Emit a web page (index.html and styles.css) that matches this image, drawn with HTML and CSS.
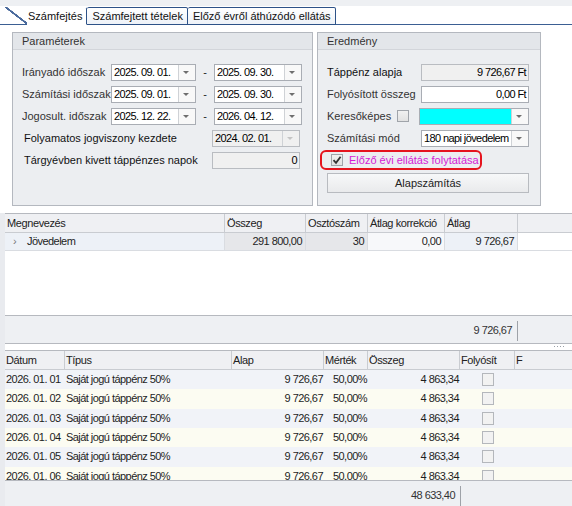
FILE: index.html
```html
<!DOCTYPE html>
<html lang="hu">
<head>
    <meta charset="UTF-8">
    <title>Számfejtés</title>
    <link rel="stylesheet" href="styles.css">
</head>
<body>
    <div class="tabbar">
        <div class="tab-lead"></div>
        <div class="tab active">Számfejtés</div>
        <div class="tab">Számfejtett tételek</div>
        <div class="tab">Előző évről áthúzódó ellátás</div>
        <div class="tab-rest"></div>
    </div>

    <div class="page">
        <div class="groups">
            <div class="group params">
                <div class="group-head">Paraméterek</div>
                <div class="group-body">
                    <div class="row">
                        <span class="lbl">Irányadó időszak</span>
                        <div class="edit date1"><span class="val">2025. 09. 01.</span><span class="drop"></span></div>
                        <span class="dash">-</span>
                        <div class="edit date2"><span class="val">2025. 09. 30.</span><span class="drop"></span></div>
                    </div>
                    <div class="row">
                        <span class="lbl">Számítási időszak</span>
                        <div class="edit date1"><span class="val">2025. 09. 01.</span><span class="drop"></span></div>
                        <span class="dash">-</span>
                        <div class="edit date2"><span class="val">2025. 09. 30.</span><span class="drop"></span></div>
                    </div>
                    <div class="row">
                        <span class="lbl">Jogosult. időszak</span>
                        <div class="edit date1"><span class="val">2025. 12. 22.</span><span class="drop"></span></div>
                        <span class="dash">-</span>
                        <div class="edit date2"><span class="val">2026. 04. 12.</span><span class="drop"></span></div>
                    </div>
                    <div class="row wide">
                        <span class="lbl long">Folyamatos jogviszony kezdete</span>
                        <div class="edit date2 disabled"><span class="val">2024. 02. 01.</span><span class="drop"></span></div>
                    </div>
                    <div class="row wide">
                        <span class="lbl long">Tárgyévben kivett táppénzes napok</span>
                        <div class="edit date2 disabled num"><span class="val">0</span></div>
                    </div>
                </div>
            </div>

            <div class="group result">
                <div class="group-head">Eredmény</div>
                <div class="group-body">
                    <div class="row">
                        <span class="lbl r-lbl dark">Táppénz alapja</span>
                        <div class="edit r-edit disabled num"><span class="val">9 726,67 Ft</span></div>
                    </div>
                    <div class="row">
                        <span class="lbl r-lbl">Folyósított összeg</span>
                        <div class="edit r-edit num"><span class="val">0,00 Ft</span></div>
                    </div>
                    <div class="row">
                        <span class="lbl kereso">Keresőképes</span>
                        <span class="check"></span>
                        <div class="edit color-edit"><span class="swatch"></span><span class="drop"></span></div>
                    </div>
                    <div class="row">
                        <span class="lbl r-lbl">Számítási mód</span>
                        <div class="edit r-edit"><span class="val">180 napi jövedelem</span><span class="drop"></span></div>
                    </div>
                    <div class="row">
                        <div class="highlight">
                            <span class="check checked">
                                <svg width="10" height="10" viewBox="0 0 10 10"><path d="M1.5 5.2 L4 7.8 L8.6 1.8" fill="none" stroke="#333" stroke-width="1.8"/></svg>
                            </span>
                            <span class="magenta">Előző évi ellátás folytatása</span>
                        </div>
                    </div>
                    <button class="btn">Alapszámítás</button>
                </div>
            </div>
        </div>

        <div class="grid grid1">
            <div class="ghead">
                <div class="c">Megnevezés</div>
                <div class="c">Összeg</div>
                <div class="c">Osztószám</div>
                <div class="c">Átlag korrekció</div>
                <div class="c">Átlag</div>
                <div class="c last"></div>
            </div>
            <div class="grow sel">
                <div class="c name"><span class="chev">&#8250;</span>Jövedelem</div>
                <div class="c r gray">291 800,00</div>
                <div class="c r gray">30</div>
                <div class="c r plain">0,00</div>
                <div class="c r">9 726,67</div>
                <div class="c last white"></div>
            </div>
            <div class="gfill"></div>
            <div class="gfoot">
                <div class="sum s1">9 726,67</div>
            </div>
        </div>

        <div class="splitter"><span class="dots"></span></div>

        <div class="grid grid2">
            <div class="ghead">
                <div class="c">Dátum</div>
                <div class="c">Típus</div>
                <div class="c">Alap</div>
                <div class="c">Mérték</div>
                <div class="c">Összeg</div>
                <div class="c">Folyósít</div>
                <div class="c last">F</div>
            </div>
            <div class="gbody" id="rows"></div>
            <div class="gfoot">
                <div class="sum s2">48 633,40</div>
            </div>
        </div>
    </div>

    <script>
        // napi tételek
        let rows = document.querySelector("#rows");
        for (let i = 1; i <= 6; i++) {
            let row = document.createElement("div");
            row.className = "grow " + (i % 2 ? "odd" : "even");
            row.innerHTML =
                '<div class="c date">2026. 01. 0' + i + '</div>' +
                '<div class="c">Saját jogú táppénz 50%</div>' +
                '<div class="c r">9 726,67</div>' +
                '<div class="c r">50,00%</div>' +
                '<div class="c r">4 863,34</div>' +
                '<div class="c mid"><span class="check small"></span></div>' +
                '<div class="c last"></div>';
            rows.appendChild(row);
        }
    </script>
</body>
</html>
```

FILE: styles.css
```css
*{
    margin: 0;
    padding: 0;
    box-sizing: border-box;
}
body{
    width: 572px;
    height: 506px;
    overflow: hidden;
    background-color: #ffffff;
    font-family: "Liberation Sans", Arial, sans-serif;
    font-size: 11px;
    color: #1e1e1e;
}

/* tab strip */
.tabbar{
    display: flex;
    align-items: flex-end;
    height: 25px;
    background: linear-gradient(#eef0f3 0, #eef0f3 6px, #ffffff 6px);
}
.tab-lead{
    width: 27px;
    height: 18px;
    border-bottom: 1px solid #3b5f93;
    background: linear-gradient(to top right, transparent 47%, #4a6a9c 48%, #4a6a9c 54%, transparent 55%) no-repeat 5px 0 / 22px 17px;
}
.tab{
    height: 18px;
    padding: 1px 4px 0 5px;
    font-size: 11px;
    line-height: 15px;
    color: #111;
    border: 1px solid #2d5288;
    border-left: none;
    border-radius: 2px 2px 0 0;
    background: linear-gradient(#ffffff, #eef2f8);
    white-space: nowrap;
}
.tab.active{
    background: #ffffff;
    border-color: transparent #2d5288 #ffffff transparent;
    padding-left: 1px;
}
.tab-rest{
    flex: 1;
    border-bottom: 1px solid #3b5f93;
}

/* group boxes */
.page{
    padding-top: 7px;
}
.groups{
    display: flex;
    gap: 4px;
    padding-left: 12px;
    height: 181px;
}
.group{
    height: 174px;
    background-color: #eceef1;
    border: 1px solid #b4b8bf;
}
.params{
    width: 301px;
}
.result{
    width: 224px;
}
.group-head{
    height: 17px;
    padding-left: 9px;
    line-height: 16px;
    font-size: 11px;
    color: #333;
    background-color: #e3e6ea;
    border-bottom: 1px solid #d2d5da;
}
.group-body{
    padding: 11px 0 0 9px;
}
.row{
    display: flex;
    align-items: center;
    height: 22px;
    font-size: 11px;
}
.lbl{
    width: 89px;
    color: #333;
    white-space: nowrap;
}
.lbl.long{
    width: 190px;
    padding-left: 2px;
    color: #111;
}
.dash{
    width: 18px;
    text-align: center;
}
.edit{
    display: flex;
    height: 17px;
    background-color: #ffffff;
    border: 1px solid #a9adb4;
    font-size: 11px;
    letter-spacing: -0.6px;
    line-height: 15px;
    color: #000;
}
.edit .val{
    flex: 1;
    padding-left: 2px;
    white-space: nowrap;
    overflow: hidden;
}
.edit.num .val{
    text-align: right;
    padding-right: 2px;
}
.drop{
    width: 17px;
    border-left: 1px solid #cfd2d6;
    background: #f8f8f8;
    position: relative;
}
.drop::after{
    content: "";
    position: absolute;
    left: 4px;
    top: 6px;
    border-left: 3.5px solid transparent;
    border-right: 3.5px solid transparent;
    border-top: 3px solid #6e6e6e;
}
.date1{
    width: 85px;
}
.date2{
    width: 88px;
}
.edit.disabled{
    background-color: #f0f0f0;
    border-color: #b9bcc1;
}
.edit.disabled .drop{
    background: #f0f0f0;
}
.edit.disabled .drop::after{
    border-top-color: #c4c4c4;
}

.r-lbl{
    width: 94px;
}
.dark{
    color: #111;
}
.r-edit{
    width: 108px;
}
.kereso{
    width: 70px;
}
.check{
    display: inline-flex;
    align-items: center;
    justify-content: center;
    width: 12px;
    height: 12px;
    border: 1px solid #a0a4aa;
    background: linear-gradient(#f1f1f1, #e2e2e2);
}
.color-edit{
    width: 110px;
    margin-left: 10px;
}
.swatch{
    flex: 1;
    background-color: #00ffff;
}
.highlight{
    display: flex;
    align-items: center;
    gap: 6px;
    width: 162px;
    height: 20px;
    margin-left: -7px;
    padding-left: 9px;
    border: 2px solid #e5141e;
    border-radius: 6px;
    white-space: nowrap;
}
.magenta{
    color: #d51ad5;
}
.btn{
    display: block;
    width: 202px;
    height: 20px;
    margin-top: 2px;
    font-family: inherit;
    font-size: 11px;
    color: #222;
    border: 1px solid #b8bbc0;
    background: linear-gradient(#f7f8f9, #e9eaec);
}

/* grids */
.grid{
    margin-left: 5px;
    border-top: 1px solid #b6b9bf;
    border-bottom: 1px solid #b6b9bf;
    letter-spacing: -0.55px;
}
body::before{
    content: "";
    position: absolute;
    left: 0;
    top: 213px;
    width: 5px;
    height: 293px;
    background-color: #e9ebef;
}
.ghead, .grow{
    display: grid;
    height: 19px;
    line-height: 18px;
}
.grid1 .ghead, .grid1 .grow{
    grid-template-columns: 220px 81px 62px 77px 73px 1fr;
}
.grid2 .ghead, .grid2 .grow{
    grid-template-columns: 60px 167px 92px 44px 92px 55px 1fr;
}
.ghead{
    background-color: #eff0f3;
    border-bottom: 1px solid #c9ccd1;
    letter-spacing: -0.4px;
}
.ghead .c{
    padding-left: 2px;
    border-right: 1px solid #c9ccd1;
    color: #222;
}
.ghead .c.last{
    border-right: none;
}
.c{
    white-space: nowrap;
    overflow: hidden;
}
.c.r{
    text-align: right;
    padding-right: 3px;
}
.grid1 .grow{
    height: 18px;
    line-height: 17px;
    border-bottom: 1px solid #d9dce1;
}
.grow.sel .c{
    background-color: #edf1f7;
    border-right: 1px solid #d9dce1;
}
.grow.sel .c.gray{
    background-color: #e6e7ea;
}
.grow.sel .c.plain{
    background-color: #f7f8fa;
}
.grow.sel .c.white{
    background-color: #ffffff;
    border-right: none;
}
.c.name{
    padding-left: 8px;
}
.chev{
    display: inline-block;
    width: 14px;
    color: #777;
}
.gfill{
    height: 64px;
}
.gfoot{
    position: relative;
    height: 28px;
    background-color: #eef0f3;
    border-top: 1px solid #b6b9bf;
}
.sum{
    position: absolute;
    top: 5px;
    height: 20px;
    line-height: 18px;
    padding-right: 5px;
    text-align: right;
    border-right: 1px solid #9ea2a8;
    color: #333;
}
.s1{
    left: 0;
    width: 513px;
}
.s2{
    left: 0;
    width: 456px;
}

.splitter{
    height: 6px;
    position: relative;
}
.dots{
    position: absolute;
    right: 7px;
    top: 2px;
    width: 11px;
    height: 1px;
    background: repeating-linear-gradient(to right, #9aa0a8 0 1px, transparent 1px 3px);
}

.gbody{
    height: 110px;
    overflow: hidden;
}
.grid2 .grow{
    height: 19.33px;
    line-height: 19px;
}
.grid2 .c{
    padding-left: 1px;
}
.grid2 .c.r{
    padding-right: 1px;
}
.grow.odd{
    background-color: #f1f3f8;
}
.grow.even{
    background-color: #fcfcf2;
}
.c.date{
    overflow: visible;
}
.c.mid{
    display: flex;
    justify-content: center;
    align-items: center;
}
.check.small{
    width: 12px;
    height: 13px;
    background: #f2f2f2;
    border-color: #b4b7bc;
}
.grid2 .gfoot{
    height: 27px;
}
```
